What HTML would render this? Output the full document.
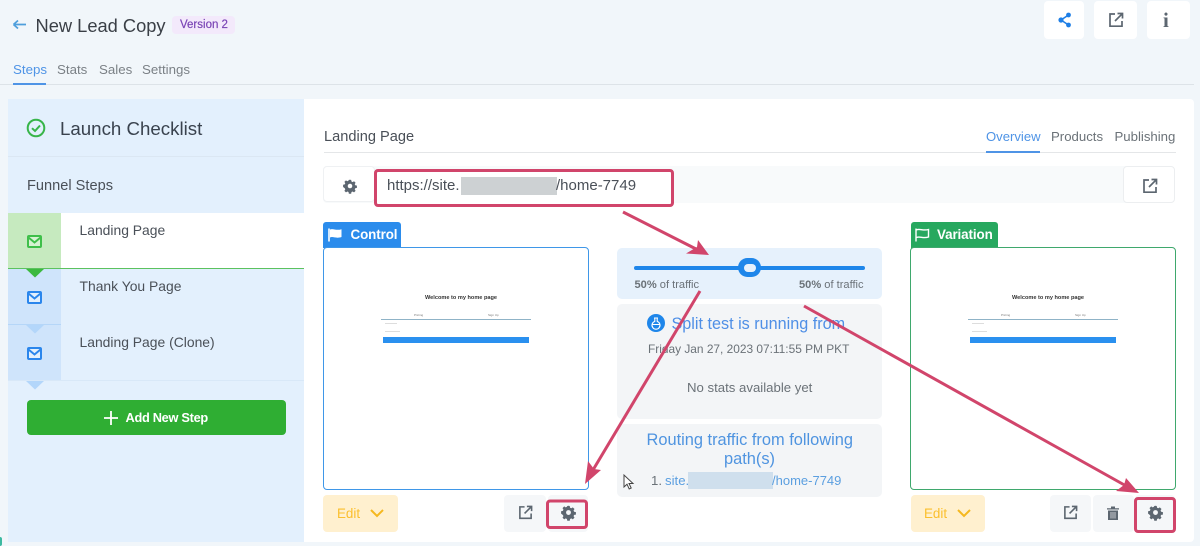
<!DOCTYPE html>
<html><head><meta charset="utf-8"><style>
html,body{margin:0;padding:0}
body{width:1200px;height:546px;position:relative;overflow:hidden;background:#f1f6fa;font-family:"Liberation Sans",sans-serif;color:#4b5563}
.a{position:absolute}
.t{position:absolute;white-space:nowrap;line-height:1}
svg{position:absolute;overflow:visible}
</style></head><body>
<svg style="left:12px;top:18px" width="16" height="14" viewBox="0 0 16 14" fill="none" stroke="#4f9fdc" stroke-width="1.7"><path d="M1.5 6.5H14M1.5 6.5L6 2.5M1.5 6.5L6 10.5"/></svg>
<div class="t" style="left:35.5px;top:16.5px;font-size:18.3px;color:#3a3f46">New Lead Copy</div>
<div class="a" style="left:172px;top:16px;width:63px;height:18px;background:#f3e9fb;border-radius:4px"></div>
<div class="t" style="left:180px;top:20px;font-size:11.5px;color:#7a44b5;-webkit-text-stroke:.2px #7a44b5">Version 2</div>
<div class="t" style="left:13px;top:63px;font-size:13.3px;color:#4f94e6">Steps</div>
<div class="t" style="left:57px;top:63px;font-size:13.3px;color:#7b8186">Stats</div>
<div class="t" style="left:99px;top:63px;font-size:13.3px;color:#7b8186">Sales</div>
<div class="t" style="left:142px;top:63px;font-size:13.3px;color:#7b8186">Settings</div>
<div class="a" style="left:0;top:84px;width:1194px;height:1px;background:#dde3e8"></div>
<div class="a" style="left:13px;top:83px;width:33px;height:2px;background:#4f94e6"></div>

<div class="a" style="left:1044px;top:1px;width:40px;height:38px;background:#fff;border-radius:4px"></div>
<div class="a" style="left:1094px;top:1px;width:43px;height:38px;background:#fff;border-radius:4px"></div>
<div class="a" style="left:1147px;top:1px;width:43px;height:38px;background:#fff;border-radius:4px"></div>
<svg style="left:1058px;top:12px" width="14" height="16" viewBox="0 0 14 16" fill="#1f7fe6"><circle cx="10.5" cy="3" r="2.4"/><circle cx="3" cy="8" r="2.6"/><circle cx="10.5" cy="13" r="2.4"/><path d="M3 8L10.5 3M3 8L10.5 13" stroke="#1f7fe6" stroke-width="1.6"/></svg>
<svg style="left:1108px;top:12px" width="16" height="16" viewBox="0 0 16 16" fill="none" stroke="#5c6670" stroke-width="1.7"><path d="M7 2H2V14.2H14V9M9.5 1.5H14.5V6.5M14.2 1.8L7 9"/></svg>
<div class="t" style="left:1163px;top:10px;font-size:21px;font-family:'Liberation Serif',serif;font-weight:bold;color:#5c6670">i</div>

<!-- sidebar -->
<div class="a" style="left:8px;top:99px;width:296px;height:443px;background:#e3f0fd"></div>
<div class="a" style="left:304px;top:99px;width:890px;height:443px;background:#fff;border-radius:0 4px 4px 0"></div>
<div class="a" style="left:8px;top:156px;width:296px;height:1px;background:#dbe7f3"></div>
<svg style="left:26px;top:118px" width="20" height="20" viewBox="0 0 20 20" fill="none" stroke="#38b54a" stroke-width="2"><circle cx="10" cy="10" r="8.3"/><path d="M6 10.2L9 13L14 7.5"/></svg>
<div class="t" style="left:60px;top:120px;font-size:18.7px;color:#39424e">Launch Checklist</div>
<div class="t" style="left:27px;top:178.5px;font-size:14.6px;color:#4a5058">Funnel Steps</div>

<div class="a" style="left:61px;top:213px;width:243px;height:55px;background:#fff"></div>
<div class="a" style="left:8px;top:213px;width:53px;height:55px;background:#c6eabf"></div>
<div class="a" style="left:8px;top:269px;width:53px;height:55px;background:#cfe4fb"></div>
<div class="a" style="left:8px;top:325px;width:53px;height:55px;background:#cfe4fb"></div>
<div class="a" style="left:8px;top:268px;width:296px;height:1px;background:#5cc25f"></div>
<div class="a" style="left:8px;top:324px;width:53px;height:1px;background:#b5d6f8"></div>
<div class="a" style="left:61px;top:324px;width:243px;height:1px;background:#e3f0fd"></div>
<div class="a" style="left:8px;top:380px;width:296px;height:1px;background:#d8e8f8"></div>
<svg style="left:26px;top:268px" width="18" height="10" viewBox="0 0 18 10"><path d="M0 1H18L9 9.5Z" fill="#3cb93f"/></svg>
<svg style="left:26px;top:324px" width="18" height="10" viewBox="0 0 18 10"><path d="M0 1H18L9 9.5Z" fill="#b3d6fa"/></svg>
<svg style="left:26px;top:380px" width="18" height="10" viewBox="0 0 18 10"><path d="M0 1H18L9 9.5Z" fill="#b3d6fa"/></svg>
<svg style="left:27px;top:235px" width="15" height="13" viewBox="0 0 15 13" fill="#d6f3d2" stroke="#3fbf4a" stroke-width="2"><rect x="1" y="1" width="13" height="11" rx="1"/><path d="M1.5 2.5L7.5 7.5L13.5 2.5" fill="none"/></svg>
<svg style="left:27px;top:291px" width="15" height="13" viewBox="0 0 15 13" fill="#e3f0fd" stroke="#2b86ec" stroke-width="2"><rect x="1" y="1" width="13" height="11" rx="1"/><path d="M1.5 2.5L7.5 7.5L13.5 2.5" fill="none"/></svg>
<svg style="left:27px;top:347px" width="15" height="13" viewBox="0 0 15 13" fill="#e3f0fd" stroke="#2b86ec" stroke-width="2"><rect x="1" y="1" width="13" height="11" rx="1"/><path d="M1.5 2.5L7.5 7.5L13.5 2.5" fill="none"/></svg>
<div class="t" style="left:79.5px;top:224px;font-size:13.9px;color:#4a5058">Landing Page</div>
<div class="t" style="left:79.5px;top:280px;font-size:13.9px;color:#4a5058">Thank You Page</div>
<div class="t" style="left:79.5px;top:336px;font-size:13.9px;color:#4a5058">Landing Page (Clone)</div>
<div class="a" style="left:27px;top:400px;width:259px;height:35px;background:#2fae33;border-radius:4px"></div>
<svg style="left:104px;top:411px" width="14" height="14" viewBox="0 0 14 14" stroke="#fff" stroke-width="1.8"><path d="M7 0V14M0 7H14"/></svg>
<div class="t" style="left:125.5px;top:411.5px;font-size:12.8px;font-weight:bold;color:#fff;letter-spacing:-.3px">Add New Step</div>
<div class="a" style="left:0;top:537px;width:2px;height:9px;background:#3cb9a0;border-radius:0 2px 2px 0"></div>

<!-- main header -->
<div class="t" style="left:324px;top:129.5px;font-size:14.6px;color:#4a5058">Landing Page</div>
<div class="a" style="left:324px;top:152px;width:852px;height:1px;background:#e4e6e8"></div>
<div class="a" style="left:986px;top:151px;width:54px;height:2px;background:#4f94e6"></div>
<div class="t" style="left:986px;top:129.5px;font-size:13.1px;color:#4f94e6">Overview</div>
<div class="t" style="left:1051px;top:129.5px;font-size:13.2px;color:#6b7278">Products</div>
<div class="t" style="left:1114.5px;top:129.5px;font-size:13.2px;color:#6b7278">Publishing</div>

<!-- url bar -->
<div class="a" style="left:323px;top:166px;width:851px;height:37px;background:#f8fafb;border-radius:4px"></div>
<div class="a" style="left:323px;top:166px;width:52px;height:36px;background:#fff;border:1px solid #eff1f3;border-radius:4px;box-sizing:border-box"></div>
<div class="a" style="left:1123px;top:166px;width:52px;height:37px;background:#fff;border:1px solid #eceef0;border-radius:4px;box-sizing:border-box"></div>
<div class="a" style="left:375px;top:170px;width:298px;height:36px;background:#fff;border-radius:3px"></div>
<svg style="left:343px;top:179px" width="14" height="14" viewBox="0 0 16 16"><use href="#gear"/></svg>
<svg width="0" height="0" style="left:0;top:0"><defs><g id="gear"><path d="M8 .8l1.3.2.4 1.9 1.3.6 1.6-1 1.8 1.8-1 1.6.6 1.3 1.9.4v2.6l-1.9.4-.6 1.3 1 1.6-1.8 1.8-1.6-1-1.3.6-.4 1.9H6.7l-.4-1.9-1.3-.6-1.6 1-1.8-1.8 1-1.6-.6-1.3L.1 9.2V6.6L2 6.2l.6-1.3-1-1.6L3.4 1.5l1.6 1 1.3-.6L6.7 1z" fill="#5c6670"/><circle cx="8" cy="8" r="2.6" fill="#fff"/></g></defs></svg>
<div class="t" style="left:387px;top:177.5px;font-size:15px;color:#4a5058">https://site.</div>
<div class="a" style="left:461px;top:177px;width:96px;height:18px;background:#cdd1d3"></div>
<div class="t" style="left:556px;top:177.5px;font-size:15px;color:#4a5058">/home-7749</div>
<svg style="left:1142px;top:178px" width="16" height="16" viewBox="0 0 16 16" fill="none" stroke="#5c6670" stroke-width="1.7"><path d="M7 2H2V14.2H14V9M9.5 1.5H14.5V6.5M14.2 1.8L7 9"/></svg>

<!-- control -->
<div class="a" style="left:323px;top:222px;width:78px;height:26px;background:#2b8cec;border-radius:3px 3px 0 0"></div>
<svg style="left:328px;top:228px" width="15" height="14" viewBox="0 0 15 14"><path d="M1 0.5V13.5" stroke="#fff" stroke-width="1.6"/><path d="M2 1.5C5 0 8 3 13.5 1.2V9C8 11 5 8 2 9.5Z" fill="#fff"/></svg>
<div class="t" style="left:350.5px;top:228px;font-size:13.4px;font-weight:bold;color:#fff;letter-spacing:-.1px">Control</div>
<div class="a" style="left:323px;top:247px;width:266px;height:243px;border:1.5px solid #3f97e8;border-radius:4px;box-sizing:border-box;background:#fff"></div>
<div class="t" style="left:425px;top:296px;font-size:5.6px;font-weight:bold;color:#333">Welcome to my home page</div>
<div class="a" style="left:381px;top:319px;width:150px;height:1px;background:#8fb3c7"></div>
<div class="t" style="left:414px;top:313.5px;font-size:3px;color:#777">Pricing</div>
<div class="t" style="left:488px;top:313.5px;font-size:3px;color:#777">Sign Up</div>
<div class="a" style="left:383px;top:337px;width:146px;height:6px;background:#2a90ef"></div>
<div class="a" style="left:385px;top:323px;width:12px;height:1px;background:#ddd"></div>
<div class="a" style="left:385px;top:331px;width:15px;height:1px;background:#ddd"></div>

<!-- variation -->
<div class="a" style="left:911px;top:222px;width:87px;height:26px;background:#27a85f;border-radius:3px 3px 0 0"></div>
<svg style="left:915px;top:228px" width="15" height="14" viewBox="0 0 15 14" fill="none" stroke="#fff" stroke-width="1.4"><path d="M1 0.5V13.5M1.5 1.8C5 0.5 8 3 13.5 1.5V9C8 10.8 5 8 1.5 9.5"/></svg>
<div class="t" style="left:937px;top:228px;font-size:13.4px;font-weight:bold;color:#fff;letter-spacing:-.1px">Variation</div>
<div class="a" style="left:910px;top:247px;width:266px;height:243px;border:1.5px solid #3fa86d;border-radius:4px;box-sizing:border-box;background:#fff"></div>
<div class="t" style="left:1012px;top:296px;font-size:5.6px;font-weight:bold;color:#333">Welcome to my home page</div>
<div class="a" style="left:968px;top:319px;width:150px;height:1px;background:#8fb3c7"></div>
<div class="t" style="left:1001px;top:313.5px;font-size:3px;color:#777">Pricing</div>
<div class="t" style="left:1075px;top:313.5px;font-size:3px;color:#777">Sign Up</div>
<div class="a" style="left:970px;top:337px;width:146px;height:6px;background:#2a90ef"></div>
<div class="a" style="left:972px;top:323px;width:12px;height:1px;background:#ddd"></div>
<div class="a" style="left:972px;top:331px;width:15px;height:1px;background:#ddd"></div>

<!-- slider -->
<div class="a" style="left:617px;top:248px;width:265px;height:51px;background:#e6f1fc;border-radius:5px"></div>
<div class="a" style="left:634px;top:265.5px;width:231px;height:4px;background:#1e86ea;border-radius:2px"></div>
<div class="a" style="left:738px;top:258px;width:23px;height:19px;background:#1e86ea;border-radius:10px"></div>
<div class="a" style="left:743.5px;top:263.5px;width:12px;height:8px;background:#e6f1fc;border-radius:4px"></div>
<div class="t" style="left:634.5px;top:280px;font-size:11.1px;color:#6b7278"><b>50%</b> of traffic</div>
<div class="t" style="left:799px;top:280px;font-size:11.1px;color:#6b7278"><b>50%</b> of traffic</div>

<!-- stats -->
<div class="a" style="left:617px;top:304px;width:265px;height:115px;background:#f3f5f7;border-radius:5px"></div>
<svg style="left:647px;top:314px" width="18" height="18" viewBox="0 0 18 18"><circle cx="9" cy="9" r="9" fill="#1e86ea"/><path d="M7 4H11M7.8 4V7.4A4 4 0 1 0 10.2 7.4V4M5.5 10.5H12.5" fill="none" stroke="#fff" stroke-width="1.1"/></svg>
<div class="t" style="left:671.5px;top:315.5px;font-size:16.2px;color:#4f8fe6">Split test is running from</div>
<div class="t" style="left:648px;top:344px;font-size:11.9px;color:#6b7278">Friday Jan 27, 2023 07:11:55 PM PKT</div>
<div class="t" style="left:687px;top:381px;font-size:13.2px;color:#6b7278">No stats available yet</div>

<!-- routing -->
<div class="a" style="left:617px;top:424px;width:265px;height:73px;background:#f3f5f7;border-radius:5px"></div>
<div class="t" style="left:646.5px;top:432px;font-size:16.4px;color:#4f94e0">Routing traffic from following</div>
<div class="t" style="left:724px;top:451px;font-size:16.4px;color:#4f94e0">path(s)</div>
<div class="t" style="left:651px;top:474px;font-size:13.2px;color:#6b7278">1.</div>
<div class="t" style="left:665px;top:474px;font-size:13.2px;color:#5b9fe0">site.</div>
<div class="a" style="left:688px;top:472px;width:85px;height:17px;background:#cfdfed"></div>
<div class="t" style="left:772px;top:474px;font-size:13px;color:#5b9fe0">/home-7749</div>
<svg style="left:623px;top:474px" width="11" height="16" viewBox="0 0 11 16"><path d="M1 1V13L4 10.2L6.2 15L8.2 14L6 9.5H10Z" fill="#fff" stroke="#444" stroke-width="1"/></svg>

<!-- bottom buttons -->
<div class="a" style="left:323px;top:495px;width:75px;height:37px;background:#fff0cf;border-radius:4px"></div>
<div class="t" style="left:337px;top:506.5px;font-size:13.4px;color:#fbbf2d">Edit</div>
<svg style="left:370px;top:509px" width="14" height="9" viewBox="0 0 14 9" fill="none" stroke="#f5b81f" stroke-width="2"><path d="M1 1L7 7L13 1"/></svg>
<div class="a" style="left:504px;top:495px;width:42px;height:37px;background:#f5f7f9;border-radius:4px"></div>
<div class="a" style="left:548px;top:495px;width:40px;height:37px;background:#f5f7f9;border-radius:4px"></div>
<svg style="left:518px;top:505px" width="15" height="15" viewBox="0 0 16 16" fill="none" stroke="#5c6670" stroke-width="1.7"><path d="M7 2H2V14.2H14V9M9.5 1.5H14.5V6.5M14.2 1.8L7 9"/></svg>
<svg style="left:561px;top:505px" width="15" height="15" viewBox="0 0 16 16"><g><path d="M8 .8l1.3.2.4 1.9 1.3.6 1.6-1 1.8 1.8-1 1.6.6 1.3 1.9.4v2.6l-1.9.4-.6 1.3 1 1.6-1.8 1.8-1.6-1-1.3.6-.4 1.9H6.7l-.4-1.9-1.3-.6-1.6 1-1.8-1.8 1-1.6-.6-1.3L.1 9.2V6.6L2 6.2l.6-1.3-1-1.6L3.4 1.5l1.6 1 1.3-.6L6.7 1z" fill="#5c6670"/><circle cx="8" cy="8" r="2.6" fill="#f5f7f9"/></g></svg>

<div class="a" style="left:911px;top:495px;width:74px;height:37px;background:#fff0cf;border-radius:4px"></div>
<div class="t" style="left:924px;top:506.5px;font-size:13.4px;color:#fbbf2d">Edit</div>
<svg style="left:957px;top:509px" width="14" height="9" viewBox="0 0 14 9" fill="none" stroke="#f5b81f" stroke-width="2"><path d="M1 1L7 7L13 1"/></svg>
<div class="a" style="left:1050px;top:495px;width:41px;height:37px;background:#f5f7f9;border-radius:4px"></div>
<div class="a" style="left:1093px;top:495px;width:41px;height:37px;background:#f5f7f9;border-radius:4px"></div>
<div class="a" style="left:1135px;top:495px;width:40px;height:37px;background:#f5f7f9;border-radius:4px"></div>
<svg style="left:1063px;top:505px" width="15" height="15" viewBox="0 0 16 16" fill="none" stroke="#5c6670" stroke-width="1.7"><path d="M7 2H2V14.2H14V9M9.5 1.5H14.5V6.5M14.2 1.8L7 9"/></svg>
<svg style="left:1107px;top:506px" width="12" height="14" viewBox="0 0 12 14"><path d="M0 2.2H12V3.5H0ZM4 .5H8V2.2H4ZM1 4.5H11V14H1Z" fill="#5c6670"/><path d="M4 6V12.5M6 6V12.5M8 6V12.5" stroke="#f5f7f9" stroke-width=".7"/></svg>
<svg style="left:1148px;top:505px" width="15" height="15" viewBox="0 0 16 16"><g><path d="M8 .8l1.3.2.4 1.9 1.3.6 1.6-1 1.8 1.8-1 1.6.6 1.3 1.9.4v2.6l-1.9.4-.6 1.3 1 1.6-1.8 1.8-1.6-1-1.3.6-.4 1.9H6.7l-.4-1.9-1.3-.6-1.6 1-1.8-1.8 1-1.6-.6-1.3L.1 9.2V6.6L2 6.2l.6-1.3-1-1.6L3.4 1.5l1.6 1 1.3-.6L6.7 1z" fill="#5c6670"/><circle cx="8" cy="8" r="2.6" fill="#f5f7f9"/></g></svg>

<!-- annotations -->
<svg style="left:0;top:0" width="1200" height="546" viewBox="0 0 1200 546" fill="none">
<g stroke="#d1456b" stroke-width="3" stroke-linejoin="round">
<rect x="375.5" y="170.5" width="297" height="35" rx="2.5"/>
<rect x="547.5" y="501" width="39" height="26.5" rx="2.5"/>
<rect x="1135.5" y="498.5" width="39" height="33" rx="2.5"/>
<path d="M623 212L700 251"/>
<path d="M700 291L590 475"/>
<path d="M804 306L1128 487"/>
</g>
<g fill="#d1456b">
<path d="M709 255L686 253.5L697 247L698 240Z"/>
<path d="M585 484L588 461L594 469L601 470Z"/>
<path d="M1139 493L1116 491L1124 485L1126 478Z"/>
</g>
</svg>
</body></html>
